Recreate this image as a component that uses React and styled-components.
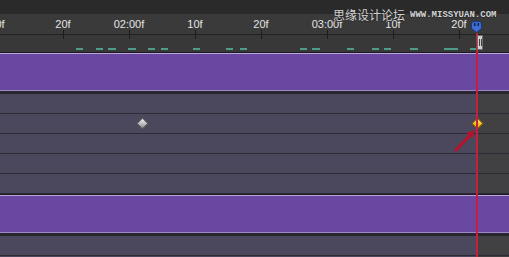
import React from 'react';
import styled, { createGlobalStyle } from 'styled-components';

const GlobalStyle = createGlobalStyle`
  html, body {
    margin: 0;
    padding: 0;
    background: #2a2a2a;
  }
  body {
    font-family: "Liberation Sans", Arial, sans-serif;
  }
`;

const Timeline = styled.div`
  position: relative;
  width: 509px;
  height: 257px;
  overflow: hidden;
  display: flex;
  flex-direction: column;
  background: #4b475c;
`;

const TopBar = styled.div`
  flex: none;
  height: 14px;
  background: #2a2a2a;
`;

const Ruler = styled.div`
  flex: none;
  height: 38px;
  display: flex;
  flex-direction: column;
  background: linear-gradient(to bottom, #3a3a3a 0 20px, #222 20px 21px, #383838 21px);
`;

const Scale = styled.div`
  display: flex;
  height: 26px;
  margin-left: -36px;
`;

const Mark = styled.div`
  flex: none;
  width: 66px;
  display: flex;
  flex-direction: column;
  align-items: center;
`;

const Label = styled.span`
  margin-top: 4px;
  font-size: 11px;
  line-height: 12px;
  color: #e4e4e4;
  white-space: nowrap;
`;

const Tick = styled.div`
  width: 1px;
  height: 9px;
  background: #1c1c1c;
`;

const Cache = styled.div`
  display: flex;
  height: 2px;
  margin-top: 8px;
`;

const Dash = styled.div`
  flex: none;
  width: ${p => p.$w}px;
  margin-left: ${p => p.$gap}px;
  background: #4e9c8c;
`;

const LayerBar = styled.div`
  flex: none;
  height: 42px;
  box-sizing: border-box;
  border-top: 1px solid #1c1a21;
  border-bottom: 3px solid #29262f;
  background: #6a48a2;
  box-shadow: inset 0 1px 0 #b9a7dd, inset 0 -1px 0 #9e88ca;
`;

const Row = styled.div`
  position: relative;
  flex: none;
  height: 20px;
  display: flex;
  box-sizing: border-box;
  border-bottom: 1px solid #2e2b36;
`;

const RowMain = styled.div`
  flex: 1;
  background: #4b475c;
`;

const RowOutside = styled.div`
  flex: none;
  width: 31px;
  background: #414143;
`;

const Key = styled.div`
  position: absolute;
  top: 5px;
  width: 7px;
  height: 7px;
  margin-left: -4px;
  transform: rotate(45deg);
  border: 1px solid ${p => (p.$active ? '#7a5810' : '#5a5a5a')};
  background: ${p =>
    p.$active
      ? 'linear-gradient(135deg, #fff08a, #f2c21c 55%, #d89a08)'
      : 'linear-gradient(135deg, #f2f2f2, #bdbdbd 55%, #808080)'};
`;

const Playhead = styled.div`
  position: absolute;
  left: 471px;
  top: 21px;
  bottom: 0;
  width: 11px;
  display: flex;
  flex-direction: column;
`;

const PlayLine = styled.div`
  flex: 1;
  width: 2px;
  margin-left: 5px;
  background: #c91d3c;
`;

const WorkEnd = styled.div`
  position: absolute;
  left: 477px;
  top: 35px;
  width: 6px;
  height: 15px;
  box-sizing: border-box;
  border: 1px solid #6e6e6e;
  background: #cfcfcf;
  display: flex;
  justify-content: center;
  align-items: center;
  gap: 1px;
`;

const Grip = styled.div`
  width: 1px;
  height: 7px;
  background: #404040;
`;

const Watermark = styled.div`
  position: absolute;
  left: 333px;
  top: 9px;
  display: flex;
  align-items: center;
  gap: 5px;
  color: #d2d2d2;
  line-height: 12px;
  text-shadow: 1px 0 #2a2a2a, -1px 0 #2a2a2a, 0 1px #2a2a2a, 0 -1px #2a2a2a;
`;

const Cn = styled.span`
  font-family: "Noto Sans CJK SC", sans-serif;
  font-size: 12px;
`;

const Site = styled.span`
  font-family: "Liberation Mono", monospace;
  font-size: 9px;
  font-weight: bold;
`;

const Arrow = styled.svg`
  position: absolute;
  left: 450px;
  top: 125px;
`;

// first label sits off the left edge, only its tail shows
const labels = ['10f', '20f', '02:00f', '10f', '20f', '03:00f', '10f', '20f'];

const dashes = [
  [76, 7], [96, 7], [108, 8], [128, 8], [148, 7], [161, 7],
  [193, 7], [226, 7], [240, 7], [300, 7], [312, 8],
  [347, 7], [372, 7], [384, 7], [410, 8], [444, 14], [470, 7],
];

const cacheDashes = dashes.map(([x, w], i) => {
  const prev = i === 0 ? 0 : dashes[i - 1][0] + dashes[i - 1][1];
  return { gap: x - prev, w };
});

const Track = ({ keys = [] }) => (
  <Row>
    <RowMain />
    <RowOutside />
    {keys.map(k => (
      <Key key={k.x} $active={k.active} style={{ left: k.x }} />
    ))}
  </Row>
);

const App = () => (
  <>
    <GlobalStyle />
    <Timeline>
      <TopBar />
      <Ruler>
        <Scale>
          {labels.map((l, i) => (
            <Mark key={i}>
              <Label>{l}</Label>
              <Tick />
            </Mark>
          ))}
        </Scale>
        <Cache>
          {cacheDashes.map((d, i) => (
            <Dash key={i} $gap={d.gap} $w={d.w} />
          ))}
        </Cache>
      </Ruler>
      <LayerBar />
      <Track />
      <Track keys={[{ x: 142 }, { x: 477, active: true }]} />
      <Track />
      <Track />
      <Track />
      <LayerBar />
      <Track />
      <Track />

      <Watermark>
        <Cn>思缘设计论坛</Cn>
        <Site>WWW.MISSYUAN.COM</Site>
      </Watermark>

      <Playhead>
        <svg width="11" height="12" viewBox="0 0 11 12">
          <path d="M0.5 3 Q0.5 0.5 3 0.5 L8 0.5 Q10.5 0.5 10.5 3 L10.5 7.5 L5.5 11.5 L0.5 7.5 Z" fill="#3e6cd2" stroke="#1c377c" />
          <rect x="3" y="2" width="1.5" height="3" fill="#0f1f4d" />
          <rect x="6.5" y="2" width="1.5" height="3" fill="#0f1f4d" />
        </svg>
        <PlayLine />
      </Playhead>
      <WorkEnd>
        <Grip />
        <Grip />
      </WorkEnd>

      <Arrow width="28" height="30" viewBox="0 0 28 30">
        <line x1="6" y1="25" x2="19.5" y2="10.8" stroke="#b8122a" strokeWidth="3" strokeLinecap="round" />
        <polygon points="25,5 22.4,13.6 16.6,8" fill="#b8122a" />
      </Arrow>
    </Timeline>
  </>
);

export default App;
